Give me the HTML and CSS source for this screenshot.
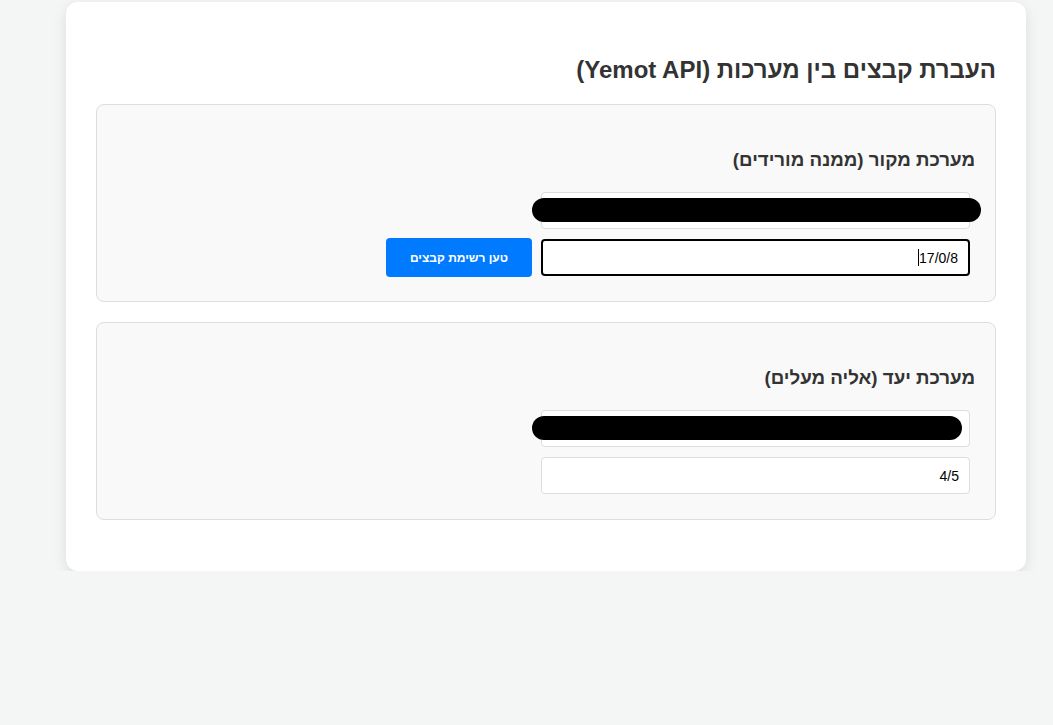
FILE: index.html
```html
<!DOCTYPE html>
<html lang="he" dir="rtl">
<head>
<meta charset="utf-8">
<title>העברת קבצים בין מערכות</title>
<link rel="stylesheet" href="styles.css">
</head>
<body>
<div class="container">
  <h2 class="title">העברת קבצים בין מערכות (Yemot API)</h2>

  <section class="system">
    <h3 class="system-title">מערכת מקור (ממנה מורידים)</h3>
    <div class="field">
      <input class="text-input" type="text" value="">
      <span class="redact redact-a"></span>
    </div>
    <div class="row">
      <div class="field">
        <input class="text-input focused" type="text" value="17/0/8"><span class="caret"></span>
      </div>
      <button class="btn" type="button">טען רשימת קבצים</button>
    </div>
  </section>

  <section class="system">
    <h3 class="system-title">מערכת יעד (אליה מעלים)</h3>
    <div class="field">
      <input class="text-input" type="text" value="">
      <span class="redact redact-b"></span>
    </div>
    <div class="field">
      <input class="text-input" type="text" value="4/5">
    </div>
  </section>
</div>
</body>
</html>
```

FILE: styles.css
```css
html, body {
  margin: 0;
  padding: 0;
}

body {
  background: #f4f5f5;
  font-family: "Liberation Sans", Arial, sans-serif;
  color: #333;
  direction: rtl;
}

.container {
  width: 960px;
  box-sizing: border-box;
  margin: 2px 27px 0 auto;
  padding: 30px 30px 31px;
  background: #fff;
  border-radius: 12px;
  box-shadow: 0 4px 14px rgba(0, 0, 0, 0.1);
}

.title {
  margin: 24px 0 20px;
  font-size: 24px;
  line-height: 28px;
  font-weight: bold;
  color: #333;
}

.system {
  display: flex;
  flex-direction: column;
  align-items: flex-start;
  background: #f9f9f9;
  border: 1px solid #ddd;
  border-radius: 8px;
  padding: 20px;
  margin-bottom: 20px;
}

.system-title {
  margin: 21px 0 14px;
  font-size: 18.72px;
  line-height: 27px;
  font-weight: bold;
  color: #333;
}

.row {
  display: flex;
  align-items: center;
}

.field {
  position: relative;
  width: 429px;
  margin: 5px;
}

.text-input {
  display: block;
  width: 100%;
  box-sizing: border-box;
  height: 37px;
  padding: 8px 10px;
  border: 1px solid #ddd;
  border-radius: 4px;
  background: #fff;
  font-family: "Liberation Sans", Arial, sans-serif;
  font-size: 14px;
  color: #000;
  direction: rtl;
  text-align: right;
}

.text-input.focused {
  border: 2px solid #000;
  padding: 7px 10px;
}

.caret {
  position: absolute;
  top: 10px;
  right: 51px;
  width: 1px;
  height: 17px;
  background: #000;
}

.redact {
  position: absolute;
  top: 6px;
  height: 24px;
  background: #000;
  border-radius: 12px;
}

.redact-a {
  right: -11px;
  width: 449px;
}

.redact-b {
  right: 8px;
  width: 430px;
}

.btn {
  margin-right: 4px;
  width: 146px;
  height: 39px;
  border: none;
  border-radius: 4px;
  background: #007bff;
  color: #fff;
  font-family: "Liberation Sans", Arial, sans-serif;
  font-size: 12px;
  font-weight: bold;
  cursor: pointer;
}
```
